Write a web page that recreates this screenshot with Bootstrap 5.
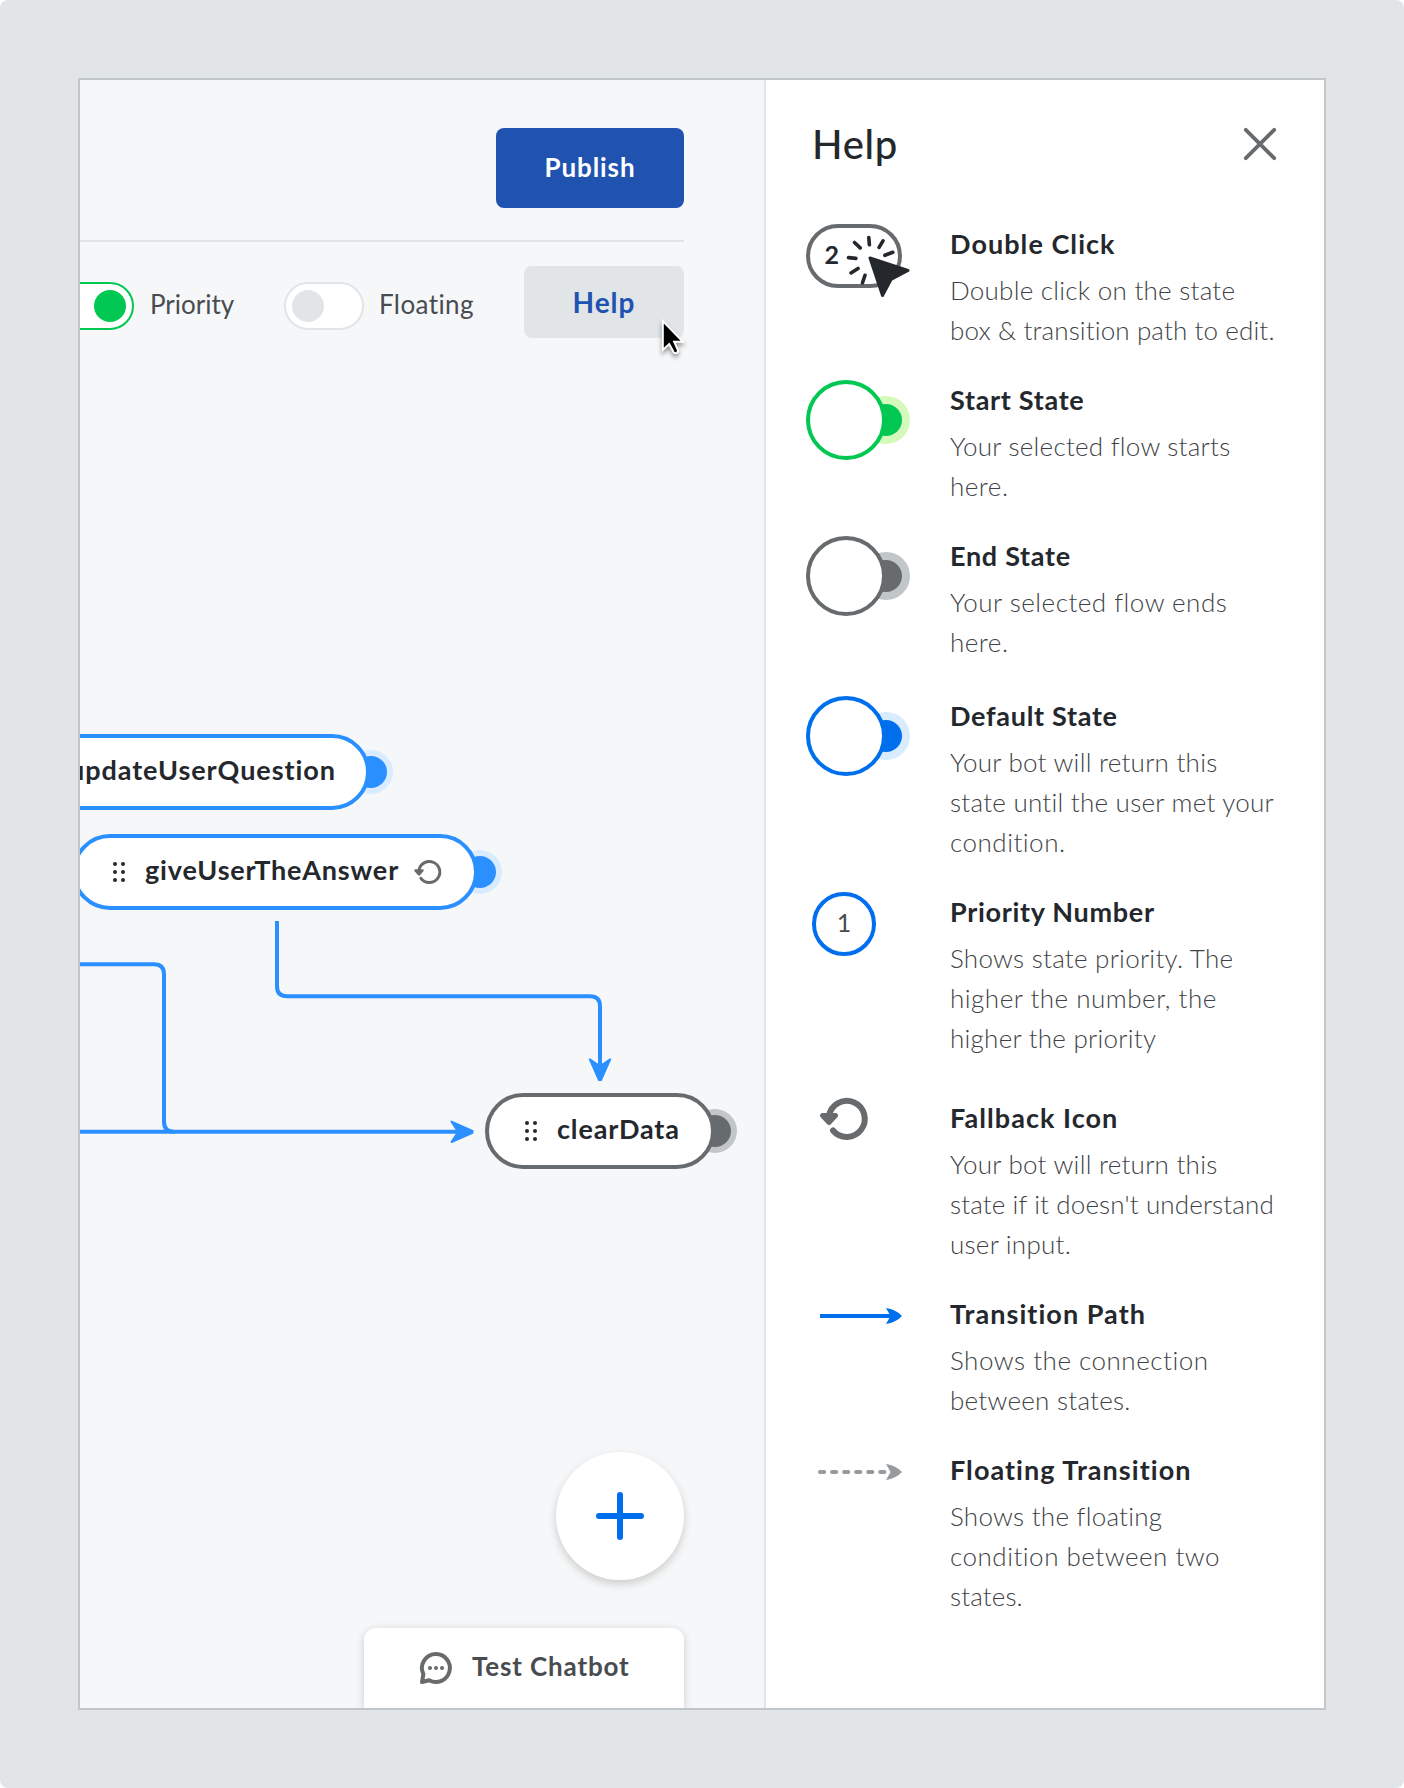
<!DOCTYPE html>
<html lang="en">
<head>
<meta charset="utf-8">
<meta name="viewport" content="width=device-width, initial-scale=1">
<title>Chatbot flow editor – Help</title>
<link href="https://cdn.jsdelivr.net/npm/bootstrap@5.3.0/dist/css/bootstrap.min.css" rel="stylesheet">
<style>
  :root { --ink:#24282d; --soft:#484c50; --gray:#676b6e; --line:#e1e5e8; --blue:#006fee; --sky:#2b90ff; --green:#00c853; }
  html { background:#fff; }
  body { font-family:Lato,"Open Sans",sans-serif; font-size:26px; line-height:40px; color:var(--ink); background:#fff; }
  svg { display:block; overflow:visible; flex:none; }
  .stage { background:var(--line); padding:78px; height:1788px; border-radius:8px; }
  .app-frame { border:2px solid #c1c7c9; height:1632px; background:#fff; }

  /* editor side */
  .editor { width:686px; border-right:2px solid var(--line); background:#f6f7f9; }
  .topbar { height:162px; margin-right:80px; border-bottom:2px solid var(--line); padding-top:48px; }
  .btn-publish, .btn-help { --bs-btn-font-size:26px; --bs-btn-font-weight:700; --bs-btn-border-radius:8px; --bs-btn-border-width:0; --bs-btn-padding-x:0; --bs-btn-padding-y:0; line-height:40px; flex:none; }
  .btn-publish { --bs-btn-color:#fff; --bs-btn-bg:#2053b0; width:188px; height:80px; padding-bottom:3px; letter-spacing:.9px; }
  .btn-help { --bs-btn-color:#2053b0; --bs-btn-bg:#e1e5e8; --bs-btn-font-size:28px; width:160px; height:72px; padding-bottom:1px; letter-spacing:1px; }
  .toolbar { margin-right:80px; padding-top:24px; color:var(--soft); }
  .toggle { width:80px; height:48px; border:2px solid var(--line); border-radius:24px; background:#fff; padding:6px; flex:none; }
  .toggle i { width:32px; height:32px; border-radius:50%; background:var(--line); }
  .toggle.is-on { border-color:var(--green); }
  .toggle.is-on i { background:var(--green); margin-left:auto; }
  .toggle-label { width:150px; flex:none; padding:18px 0 0 16px; letter-spacing:0; }
  .toggle-label.is-wide { width:160px; padding-left:15px; letter-spacing:.4px; }

  /* flow canvas */
  .flow-node, .port, .pointer { position:absolute; }
  .flow-node { height:76px; border:4px solid var(--sky); border-radius:38px; background:#fff; font-size:27px; font-weight:700; letter-spacing:.85px; padding-bottom:4px; }
  .flow-node svg { margin-top:4px; }
  .port { width:32px; height:32px; border-radius:50%; background:var(--sky); box-shadow:0 0 0 6px #d9ebff; }
  .is-end.flow-node { border-color:var(--gray); }
  .is-end.port { background:var(--gray); box-shadow:0 0 0 6px #c1c7c7; }
  .port-update { left:275px; top:676px; }
  .port-give { left:384px; top:776px; }
  .port-clear { left:619px; top:1035px; }
  .node-update { left:-60px; top:654px; width:350px; padding-right:30px; letter-spacing:.95px; }
  .node-give { left:-8px; top:754px; width:406px; padding:0 0 4px 37px; }
  .node-give span { margin:0 15px 0 20px; }
  .node-clear { left:405px; top:1013px; width:230px; padding-left:36px; gap:20px; }
  .pointer { left:581px; top:239px; filter:drop-shadow(0 3px 2px rgba(0,0,0,.4)); }

  .floating-actions { margin-right:80px; gap:48px; }
  .add-btn { width:128px; height:128px; background:#fff; box-shadow:0 4px 8px rgba(40,40,20,.2); }
  .chat-tab { width:320px; height:80px; border-radius:12px 12px 0 0; background:#fff; box-shadow:0 2px 8px rgba(40,40,30,.2); color:var(--soft); font-weight:700; letter-spacing:.85px; padding:18px 0 0 56px; gap:20px; }
  .chat-tab svg { margin-top:6px; }

  /* help side */
  .help-panel { padding-left:40px; }
  .help-head { height:144px; padding:38px 48px 0 6px; }
  .help-head h1 { font-size:40px; line-height:52px; font-weight:500; letter-spacing:.7px; }
  .entry { margin-bottom:30px; }
  .entry-late { padding-top:4px; }
  .entry-later { padding-top:10px; }
  .entry-icon { width:144px; flex:none; }
  .entry h2 { font-size:27px; line-height:40px; font-weight:700; margin:0 0 6px; letter-spacing:.7px; }
  .entry h2.airy { letter-spacing:1.05px; }
  .entry p { font-weight:300; color:#3e4246; margin:0; letter-spacing:.25px; }
  .entry p span { display:block; white-space:nowrap; }
  .entry p .snug { letter-spacing:.12px; }
  .entry p .airy { letter-spacing:.5px; }
</style>
</head>
<body>
<div class="stage">
  <div class="app-frame d-flex overflow-hidden">

    <section class="editor position-relative d-flex flex-column overflow-hidden flex-shrink-0">
      <header class="topbar d-flex justify-content-end align-items-start">
        <button type="button" class="btn btn-publish">Publish</button>
      </header>
      <div class="toolbar d-flex justify-content-end align-items-start">
        <div class="toggle is-on d-flex mt-3"><i></i></div>
        <span class="toggle-label">Priority</span>
        <div class="toggle d-flex mt-3"><i></i></div>
        <span class="toggle-label is-wide">Floating</span>
        <button type="button" class="btn btn-help">Help</button>
      </div>

      <svg class="position-absolute top-0 start-0" width="684" height="1628" viewBox="80 80 684 1628" fill="none" stroke="#2b90ff" stroke-width="4">
        <path d="M277 921v65.300q0 10 10 10h303q10 0 10 10v62"/>
        <path d="M70 964.300h84q10 0 10 10v147.400q0 10 10 10"/>
        <path d="M70 1131.800h390"/>
        <path d="M589.800 1059.300l9.200 6.200h2l9.200-6.200-9.200 20.700h-2z" fill="#2b90ff" stroke-width="2" stroke-linejoin="round"/>
        <path d="M451.500 1121.600l6 9.200v2l-6 9.200 21-9.200v-2z" fill="#2b90ff" stroke-width="2" stroke-linejoin="round"/>
      </svg>

      <div class="port port-update"></div>
      <div class="flow-node node-update d-flex align-items-center justify-content-end">updateUserQuestion</div>

      <div class="port port-give"></div>
      <div class="flow-node node-give d-flex align-items-center">
        <svg width="12" height="20" fill="#24282d"><circle cx="2" cy="2" r="2"/><circle cx="10" cy="2" r="2"/><circle cx="2" cy="10" r="2"/><circle cx="10" cy="10" r="2"/><circle cx="2" cy="18" r="2"/><circle cx="10" cy="18" r="2"/></svg>
        <span>giveUserTheAnswer</span>
        <svg width="28" height="24" viewBox="0 0 28 24" fill="none" stroke="#676b6e" stroke-width="3" stroke-linecap="round" stroke-linejoin="round"><path d="M6.900 18.300A10.500 10.500 0 1 0 5 10"/><path d="M1.500 10.500h7l-3.500 3.800z" fill="#676b6e" stroke-width="2.500"/></svg>
      </div>

      <div class="port port-clear is-end"></div>
      <div class="flow-node node-clear is-end d-flex align-items-center">
        <svg width="12" height="20" fill="#24282d"><circle cx="2" cy="2" r="2"/><circle cx="10" cy="2" r="2"/><circle cx="2" cy="10" r="2"/><circle cx="10" cy="10" r="2"/><circle cx="2" cy="18" r="2"/><circle cx="10" cy="18" r="2"/></svg>
        <span>clearData</span>
      </div>

      <svg class="pointer" width="24" height="36" viewBox="0 0 24 36"><path d="M1.800 2v29l6.400-6 4.300 8q1 1.700 3 .9 2.200-1 1.300-3.100l-3.600-8h8.800z" fill="#000" stroke="#fff" stroke-width="2"/></svg>

      <div class="floating-actions d-flex flex-column align-items-end mt-auto">
        <button type="button" class="add-btn border-0 rounded-circle d-flex align-items-center justify-content-center p-0">
          <svg width="48" height="48" stroke="#006fee" stroke-width="6" stroke-linecap="round"><path d="M24 3v42M3 24h42"/></svg>
        </button>
        <div class="chat-tab d-flex align-items-start">
          <svg width="32" height="32" fill="none" stroke="#676b6e" stroke-width="4" stroke-linejoin="round"><path d="M16 2a14 14 0 1 1-6.800 26.300L2 30l1.400-7.800A14 14 0 0 1 16 2z"/><g fill="#676b6e" stroke="none"><circle cx="10" cy="16" r="2"/><circle cx="16" cy="16" r="2"/><circle cx="22" cy="16" r="2"/></g></svg>
          <span>Test Chatbot</span>
        </div>
      </div>
    </section>

    <aside class="help-panel flex-grow-1">
      <div class="help-head d-flex justify-content-between">
        <h1>Help</h1>
        <svg class="mt-2" width="32" height="36" viewBox="0 -2 32 36" stroke="#676b6e" stroke-width="3.800" stroke-linecap="round"><path d="M1.800 1.800l28.400 28.400M30.200 1.800L1.800 30.200"/></svg>
      </div>

      <div class="entry d-flex">
        <div class="entry-icon">
          <svg width="104" height="74" viewBox="0 0 104 74">
            <rect x="2" y="2" width="92" height="60" rx="30" fill="#fff" stroke="#676b6e" stroke-width="4"/>
            <text x="18.500" y="40" font-size="25" font-weight="700" fill="#24282d">2</text>
            <path d="M48.500 18.500l5.700 5.400M62.800 13.500l.6 7.300M77 16.800l-3.900 6.600M86.800 28.300l-7.900 3M42.500 33.600l7.400.8M52 44.500l-7 4.400M59 51.300l-2.500 7.500" stroke="#24282d" stroke-width="3.600" stroke-linecap="round"/>
            <path d="M64 34l38 12.500-17 9-8.500 16z" fill="#24282d" stroke="#24282d" stroke-width="3" stroke-linejoin="round"/>
          </svg>
        </div>
        <div>
          <h2 class="airy">Double Click</h2>
          <p><span>Double click on the state</span><span class="snug">box &amp; transition path to edit.</span></p>
        </div>
      </div>

      <div class="entry d-flex">
        <div class="entry-icon">
          <svg width="104" height="80"><circle cx="80" cy="40" r="24" fill="#d5f9bb"/><circle cx="80" cy="40" r="16" fill="#00c853"/><circle cx="40" cy="40" r="38" fill="#fff" stroke="#00c853" stroke-width="4"/></svg>
        </div>
        <div>
          <h2>Start State</h2>
          <p><span>Your selected flow starts</span><span class="airy">here.</span></p>
        </div>
      </div>

      <div class="entry d-flex">
        <div class="entry-icon">
          <svg width="104" height="80"><circle cx="80" cy="40" r="24" fill="#c1c7c7"/><circle cx="80" cy="40" r="16" fill="#676b6e"/><circle cx="40" cy="40" r="38" fill="#fff" stroke="#676b6e" stroke-width="4"/></svg>
        </div>
        <div>
          <h2>End State</h2>
          <p><span class="airy">Your selected flow ends</span><span class="airy">here.</span></p>
        </div>
      </div>

      <div class="entry entry-late d-flex">
        <div class="entry-icon">
          <svg width="104" height="80"><circle cx="80" cy="40" r="24" fill="#d9ebff"/><circle cx="80" cy="40" r="16" fill="#006fee"/><circle cx="40" cy="40" r="38" fill="#fff" stroke="#006fee" stroke-width="4"/></svg>
        </div>
        <div>
          <h2>Default State</h2>
          <p><span>Your bot will return this</span><span>state until the user met your</span><span class="airy">condition.</span></p>
        </div>
      </div>

      <div class="entry d-flex">
        <div class="entry-icon">
          <svg width="104" height="64"><circle cx="38" cy="32" r="30" fill="#fff" stroke="#006fee" stroke-width="4"/><text x="38" y="40" font-size="25" text-anchor="middle" fill="#484c50">1</text></svg>
        </div>
        <div>
          <h2>Priority Number</h2>
          <p><span>Shows state priority. The</span><span class="airy">higher the number, the</span><span>higher the priority</span></p>
        </div>
      </div>

      <div class="entry entry-later d-flex">
        <div class="entry-icon">
          <svg width="104" height="42" fill="none" stroke="#676b6e" stroke-width="6" stroke-linecap="round" stroke-linejoin="round"><path d="M27 32.500A18 18 0 1 0 23 18"/><path d="M16.500 17.500h13l-6.500 7z" fill="#676b6e" stroke-width="5"/></svg>
        </div>
        <div>
          <h2 class="airy">Fallback Icon</h2>
          <p><span>Your bot will return this</span><span class="snug">state if it doesn't understand</span><span>user input.</span></p>
        </div>
      </div>

      <div class="entry d-flex">
        <div class="entry-icon">
          <svg width="104" height="32"><path d="M14 22h72" stroke="#006fee" stroke-width="4"/><path d="M80 14q10 1.500 16 8-6 6.500-16 8l4.500-8z" fill="#006fee"/></svg>
        </div>
        <div>
          <h2 class="airy">Transition Path</h2>
          <p><span class="airy">Shows the connection</span><span>between states.</span></p>
        </div>
      </div>

      <div class="entry d-flex mb-0">
        <div class="entry-icon">
          <svg width="104" height="32"><path d="M14 22h68" stroke="#969b9e" stroke-width="4" stroke-linecap="round" stroke-dasharray="4.200 7.850"/><path d="M80 14q10 1.500 16 8-6 6.500-16 8l4.500-8z" fill="#969b9e"/></svg>
        </div>
        <div>
          <h2 class="airy">Floating Transition</h2>
          <p><span>Shows the floating</span><span class="airy">condition between two</span><span class="snug">states.</span></p>
        </div>
      </div>
    </aside>
  </div>
</div>
<script src="https://cdn.jsdelivr.net/npm/bootstrap@5.3.0/dist/js/bootstrap.bundle.min.js"></script>
</body>
</html>
